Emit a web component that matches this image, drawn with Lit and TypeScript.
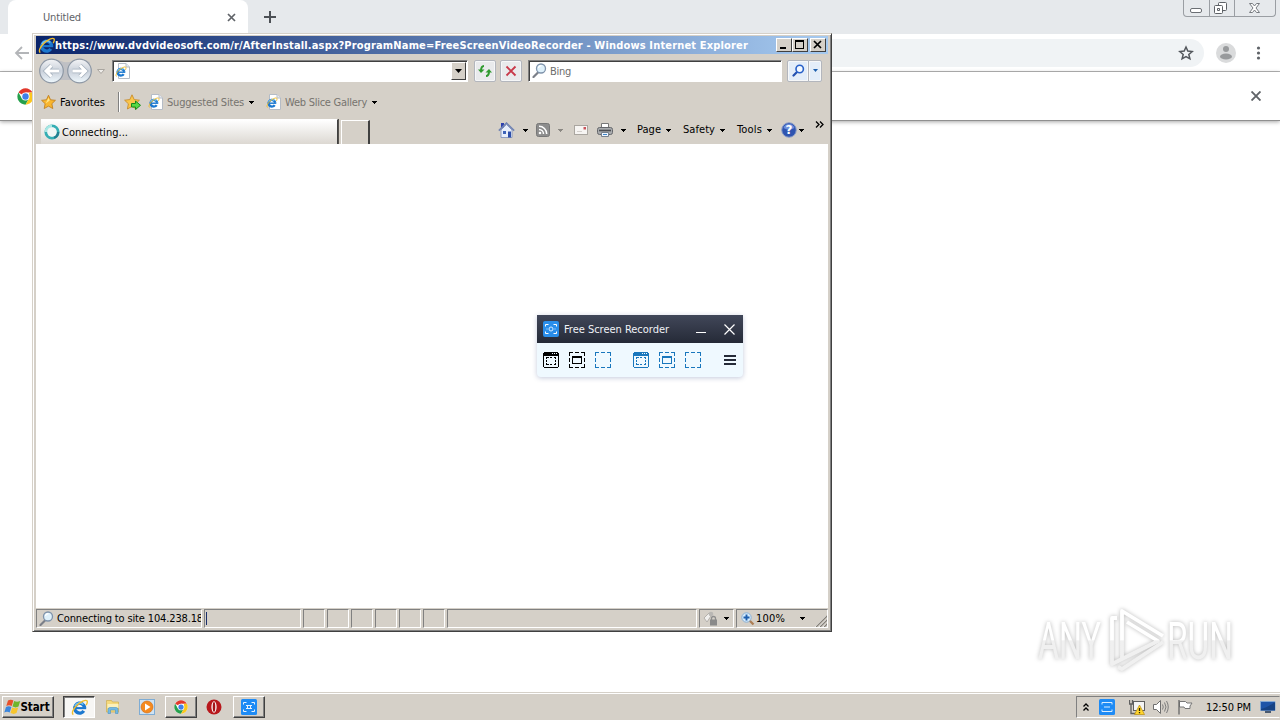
import { LitElement, css, html, svg } from "lit";
import { customElement, property, query } from "lit/decorators.js";

const arrow = (color = "#000") => html`
  <svg class="arrow" width="6" height="3" viewBox="0 0 6 3" shape-rendering="crispEdges">
    <path d="M1 0h5v1h-1v1h-1v1h-1v-1h-1v-1h-1z" fill=${color} />
  </svg>`;

const ieShape = svg`
  <circle cx="8.200" cy="8.600" r="4.600" fill="none" stroke="#1c78cf" stroke-width="3.300" stroke-dasharray="24.900 4" transform="rotate(34 8.200 8.600)" />
  <path d="M4.500 7.600h9.800v2h-9.800z" fill="#1c78cf" />
  <path d="M3.600 6.800a4.800 4.800 0 0 1 8-1.600" fill="none" stroke="#6fc0f2" stroke-width="1.500" />
  <path d="M2.200 14.600C.2 13.600 2 9.200 5.600 5.800S13.800.4 15 1.700c.7.8.2 2.400-.7 4" fill="none" stroke="#f0bd2c" stroke-width="1.300" />`;

const ieIcon = (size = 16) => html`
  <svg width=${size} height=${size} viewBox="0 0 16 16">${ieShape}</svg>`;

const iePage = html`
  <svg width="15" height="16" viewBox="0 0 15 16">
    <path d="M3.500.5h7.500l3.500 3.500v11.500h-11z" fill="#fff" stroke="#b5bcc6" />
    <path d="M11 .5v3.500h3.500" fill="#e6eaf0" stroke="#b5bcc6" />
    <g transform="translate(0 3) scale(.72)">${ieShape}</g>
  </svg>`;

const starPath = "M8 .8l2.200 4.800 5.200.6-3.800 3.600 1 5.200L8 12.400 3.400 15l1-5.200L.6 6.200l5.200-.6z";

const lens = (size = 15) => html`
  <svg width=${size} height=${size} viewBox="0 0 15 15">
    <path d="M6 9.500L1.500 14" stroke="#7b7f88" stroke-width="2.200" stroke-linecap="round" />
    <circle cx="9" cy="5.500" r="4.500" fill="#dff1fb" stroke="#7f93ab" stroke-width="1.300" />
    <path d="M6.500 5a2.600 2.600 0 0 1 3-2.200" fill="none" stroke="#fff" stroke-width="1.300" />
  </svg>`;

const chromeIcon = (size = 16) => html`
  <svg width=${size} height=${size} viewBox="0 0 48 48">
    <circle cx="24" cy="24" r="23" fill="#fff" />
    <path d="M24 24L4.100 12.500A23 23 0 0 1 43.900 12.500H24z" fill="#e2382c" />
    <path d="M4.100 12.500A23 23 0 0 0 24 47l10-17.300L24 24 14 29.700z" fill="#25a04c" />
    <path d="M43.900 12.500A23 23 0 0 1 24 47l10-17.300V12.500z" fill="#fbc71e" />
    <circle cx="24" cy="24" r="11.500" fill="#fff" />
    <circle cx="24" cy="24" r="9" fill="#3f80ea" />
  </svg>`;

const recorderIcon = html`
  <svg width="16" height="16" viewBox="0 0 16 16">
    <rect width="16" height="16" rx="2" fill="#2a8eea" />
    <path d="M2.500 5.500v-2h3M10.500 3.500h3v2M13.500 10.500v2h-3M5.500 12.500h-3v-2" fill="none" stroke="#fff" />
    <circle cx="8" cy="8" r="2" fill="none" stroke="#d6ecff" />
    <path d="M3.500 8h1M11.500 8h1" stroke="#d6ecff" />
  </svg>`;

const trayRecorderIcon = html`
  <svg width="16" height="16" viewBox="0 0 16 16">
    <rect width="16" height="16" rx="1.500" fill="#1e8bf5" />
    <path d="M2.500 5.500v-2h3M10.500 3.500h3v2M13.500 10.500v2h-3M5.500 12.500h-3v-2M5 6.500h6M5 9.500h6M6.500 6v4M9.500 6v4" fill="none" stroke="#e6f3ff" />
  </svg>`;

// Dashed selection frame, optionally with a browser bar or an inner window
const captureIcon = (kind: string, color: string) => html`
  <svg width="16" height="16" viewBox="0 0 16 16" shape-rendering="crispEdges">
    ${kind === "window" ? svg`
      <rect x=".5" y=".5" width="15" height="15" rx="2" fill="none" stroke=${color} />
      <path d="M1 1h14v3h-14z" fill=${color} />
      <path d="M9 1h1v1h-1zM11 1h1v1h-1zM13 1h1v1h-1z" fill="#eff9ff" />
      <path d="M3.500 7v-1.500h2M7 5.500h2M10.500 5.500h2v1.500M12.500 8v2M12.500 11v1.500h-2M9 12.500h-2M5.500 12.500h-2v-1.500M3.500 10v-2" fill="none" stroke=${color} />`
    : svg`
      <path d="M.5 4v-3.500h3.500M6 .5h4M12 .5h3.500v3.500M15.500 6v4M15.500 12v3.500h-3.500M10 15.500h-4M4 15.500h-3.500v-3.500M.5 10v-4" fill="none" stroke=${color} />`}
    ${kind === "object" ? svg`
      <rect x="3.500" y="4.500" width="9" height="7" fill="none" stroke=${color} />
      <path d="M3 4h10v2h-10z" fill=${color} />` : ""}
  </svg>`;

const homeIcon = html`
  <svg width="17" height="16" viewBox="0 0 17 16">
    <path d="M3 1h3v5h-3z" fill="#2b3fae" />
    <path d="M3 8l5.500-5.500L14 8v7.500h-11z" fill="#e7eefb" stroke="#7a8cb8" stroke-width=".8" />
    <path d="M.8 8.600L8.500 1l7.700 7.600" fill="none" stroke="#7083b3" stroke-width="1.500" />
    <path d="M5 9h3v3h-3z" fill="#3d63b8" />
    <path d="M10 9.500h3v6h-3z" fill="#2d4eaa" />
  </svg>`;

const rssIcon = html`
  <svg width="14" height="14" viewBox="0 0 14 14">
    <rect x=".5" y=".5" width="13" height="13" rx="2" fill="#8d8d8d" stroke="#777" />
    <circle cx="4" cy="10" r="1.300" fill="#fff" />
    <path d="M3 6.500a4.500 4.500 0 0 1 4.500 4.500M3 3.300a7.700 7.700 0 0 1 7.700 7.700" fill="none" stroke="#fff" stroke-width="1.500" />
  </svg>`;

const mailIcon = html`
  <svg width="15" height="12" viewBox="0 0 15 12">
    <rect x=".5" y="1.500" width="13" height="9" fill="#f7f5f3" stroke="#aaa6a0" />
    <path d="M3 7.500h5" stroke="#d4d0cc" />
    <path d="M9.500 3h2.500v2.500h-2.500z" fill="#c9545b" />
  </svg>`;

const printerIcon = html`
  <svg width="16" height="16" viewBox="0 0 16 16">
    <path d="M4.500 1.500h7v5h-7z" fill="#fff" stroke="#777" />
    <rect x=".5" y="5.500" width="15" height="7" rx="2" fill="#a9abae" stroke="#65676b" />
    <path d="M2 8.500h12" stroke="#4c4e53" stroke-width="1.600" />
    <path d="M4.500 10.500h7v4h-7z" fill="#eef6ff" stroke="#77818d" />
    <path d="M6 12.500h4" stroke="#3f86c9" />
  </svg>`;

const helpIcon = html`
  <svg width="16" height="16" viewBox="0 0 16 16">
    <circle cx="8" cy="8" r="7.300" fill="#2f54b0" stroke="#8fa0c8" />
    <path d="M2.500 6a5.800 5.800 0 0 1 11 0q-5.500 3-11 0z" fill="#6d8fdb" />
    <text x="8" y="12.300" text-anchor="middle" font-family="DejaVu Sans" font-weight="bold" font-size="12" fill="#fff">?</text>
  </svg>`;

@customElement("fit-label")
export class FitLabel extends LitElement {
  static styles = css`
    :host {
      display: block;
      flex: none;
      padding-top: 1px;
      white-space: pre;
      line-height: 14px;
    }
    span {
      display: inline-block;
    }
  `;

  @property({ type: String })
  text = "";

  @property({ type: Number })
  width = 0;

  @query("span")
  private span!: HTMLElement;

  // Spread the letters so that the text takes the width it was given
  firstUpdated() {
    const natural = this.span.getBoundingClientRect().width;
    this.style.width = `${this.width}px`;
    this.style.letterSpacing = `${(this.width - natural) / this.text.length}px`;
  }

  render() {
    return html`<span>${this.text}</span>`;
  }
}

const label = (text: string, width: number) => html`<fit-label text=${text} width=${width}></fit-label>`;

@customElement("chrome-window")
export class ChromeWindow extends LitElement {
  static styles = css`
    :host {
      display: flex;
      flex-direction: column;
      height: 692px;
      background: #fff;
      color: #5f6368;
    }
    svg {
      display: block;
      flex: none;
    }
    .strip {
      display: flex;
      height: 34px;
      padding-left: 8px;
      background: #e6e9ec;
    }
    .tab {
      display: flex;
      align-items: center;
      box-sizing: border-box;
      width: 240px;
      padding: 0 12px 0 35px;
      background: #fff;
      border-radius: 8px 8px 0 0;
      justify-content: space-between;
    }
    .plus {
      margin: 11px 0 0 16px;
    }
    .controls {
      display: flex;
      box-sizing: border-box;
      width: 93px;
      height: 17px;
      margin: 0 4px 0 auto;
      border: 1px solid #9a9ea3;
      border-top: 0;
      border-radius: 0 0 4px 4px;
    }
    .controls svg + svg {
      border-left: 1px solid #9a9ea3;
    }
    .toolbar {
      display: flex;
      align-items: center;
      height: 37px;
      padding: 0 19px 0 14px;
      border-bottom: 1px solid #b6b6b6;
    }
    .omnibox {
      display: flex;
      align-items: center;
      justify-content: flex-end;
      flex: 1;
      box-sizing: border-box;
      height: 28px;
      margin: 0 12px 0 70px;
      padding-right: 10px;
      border-radius: 14px;
      background: #f0f3f5;
    }
    .more {
      margin-left: 20px;
    }
    .infobar {
      display: flex;
      align-items: center;
      justify-content: space-between;
      height: 48px;
      padding: 0 19px 0 17px;
      border-bottom: 1px solid #8f8f8f;
      box-shadow: 0 1px 4px rgba(0, 0, 0, 0.35);
    }
  `;

  render() {
    return html`
      <div class="strip">
        <div class="tab">
          ${label("Untitled", 38)}
          <svg width="9" height="9" viewBox="0 0 9 9"><path d="M1 1l7 7M8 1L1 8" stroke="#5f6368" stroke-width="1.700" /></svg>
        </div>
        <svg class="plus" width="12" height="12" viewBox="0 0 12 12"><path d="M0 6h12M6 0v12" stroke="#4c5055" stroke-width="2" /></svg>
        <div class="controls">
          <svg width="25" height="16" viewBox="0 0 25 16"><rect x="6.500" y="8.500" width="11" height="4" rx="1.500" fill="#fff" stroke="#6b6f74" /></svg>
          <svg width="24" height="16" viewBox="0 0 24 16">
            <rect x="8.500" y="2.500" width="8" height="8" rx="1" fill="#fff" stroke="#5d6166" />
            <rect x="4.500" y="5.500" width="8" height="8" rx="1" fill="#fff" stroke="#5d6166" />
            <path d="M7.500 8.500h2v2h-2z" fill="none" stroke="#5d6166" />
          </svg>
          <svg width="40" height="16" viewBox="0 0 40 16">
            <path d="M14.500 3.500h3l2 2.500 2-2.500h3l-3.500 4.500 3.500 4.500h-3l-2-2.500-2 2.500h-3l3.500-4.500z" fill="#fff" stroke="#777b80" />
          </svg>
        </div>
      </div>
      <div class="toolbar">
        <svg width="16" height="14" viewBox="0 0 16 14"><path d="M15 7H2M8 1L2 7l6 6" fill="none" stroke="#b3b5b8" stroke-width="1.800" /></svg>
        <div class="omnibox">
          <svg width="16" height="16" viewBox="0 0 16 16"><path d="M8 2l1.800 4.100 4.400.4-3.400 2.900 1.100 4.400L8 11.500l-3.900 2.300 1.100-4.400-3.400-2.900 4.400-.4z" fill="none" stroke="#53575c" stroke-width="1.500" /></svg>
        </div>
        <svg width="20" height="20" viewBox="0 0 20 20">
          <circle cx="10" cy="10" r="10" fill="#dadbdc" />
          <circle cx="10" cy="6" r="3" fill="#989a9c" />
          <ellipse cx="10" cy="13.500" rx="6" ry="3" fill="#989a9c" />
        </svg>
        <svg class="more" width="5" height="14" viewBox="0 0 5 14">
          <circle cx="2.500" cy="2" r="1.600" fill="#5f6368" /><circle cx="2.500" cy="7" r="1.600" fill="#5f6368" /><circle cx="2.500" cy="12" r="1.600" fill="#5f6368" />
        </svg>
      </div>
      <div class="infobar">
        ${chromeIcon(17)}
        <svg width="10" height="10" viewBox="0 0 10 10"><path d="M.5.5l9 9M9.500.5l-9 9" stroke="#606468" stroke-width="1.900" /></svg>
      </div>
    `;
  }
}

@customElement("explorer-window")
export class ExplorerWindow extends LitElement {
  static styles = css`
    :host {
      display: flex;
      flex-direction: column;
      box-sizing: border-box;
      width: 800px;
      height: 599px;
      padding: 2px;
      border: 1px solid;
      border-color: #d5d0c8 #404040 #404040 #d5d0c8;
      background: #d5d0c8;
      box-shadow: inset 1px 1px #fff, inset -1px -1px #808080;
      color: #000;
    }
    svg {
      display: block;
      flex: none;
    }
    .title {
      display: flex;
      align-items: center;
      height: 18px;
      margin: 0 1px;
      padding-right: 2px;
      background: linear-gradient(90deg, #0a246a, #a6caf0);
      color: #fff;
      font-weight: bold;
    }
    .title svg {
      margin: 0 0 0 2px;
    }
    .buttons {
      display: flex;
      margin-left: auto;
    }
    .buttons svg {
      box-sizing: border-box;
      width: 16px;
      height: 14px;
      margin: 0;
      background: #d5d0c8;
      border: 1px solid;
      border-color: #fff #404040 #404040 #fff;
    }
    .buttons .close {
      margin-left: 2px;
    }
    .nav {
      display: flex;
      align-items: center;
      height: 33px;
      padding-left: 4px;
    }
    .field {
      display: flex;
      align-items: center;
      box-sizing: border-box;
      height: 22px;
      background: #fff;
      border: 1px solid;
      border-color: #808080 #fff #fff #808080;
      box-shadow: inset 1px 1px #404040;
    }
    .address {
      width: 356px;
      margin-left: 5px;
      padding: 0 1px 0 2px;
      justify-content: space-between;
    }
    .drop {
      display: flex;
      align-items: center;
      justify-content: center;
      box-sizing: border-box;
      width: 15px;
      height: 18px;
      background: #d5d0c8;
      border: 1px solid;
      border-color: #fff #404040 #404040 #fff;
    }
    .tool {
      display: flex;
      align-items: center;
      justify-content: center;
      box-sizing: border-box;
      width: 22px;
      height: 22px;
      border: 1px solid #b3b6bd;
      border-radius: 2px;
      background: #e9eaec;
      box-shadow: inset 0 0 0 1px #f6f7f8;
    }
    .refresh {
      margin: 0 4px 0 6px;
    }
    .search {
      width: 254px;
      margin: 0 5px 0 6px;
      padding-left: 3px;
      color: #6d6d6d;
    }
    .search fit-label {
      margin: 2px 0 0 3px;
    }
    .find {
      background: #e3edf9;
      border-radius: 2px 0 0 2px;
    }
    .options {
      width: 14px;
      margin-left: -1px;
      background: #e3edf9;
      border-radius: 0 2px 2px 0;
    }
    .favorites {
      display: flex;
      align-items: center;
      height: 30px;
      padding-left: 6px;
      color: #77746f;
    }
    .favorites .black {
      margin: 0 13px 0 4px;
      color: #000;
    }
    .rule {
      width: 1px;
      height: 20px;
      margin-right: 4px;
      background: #808080;
      border-right: 1px solid #fff;
    }
    .add {
      margin-right: 7px;
    }
    .favorites .arrow {
      margin: 0 12px 0 4px;
    }
    .favorites fit-label {
      margin-left: 4px;
    }
    .favorites .black fit-label {
      margin: 0;
    }
    .tabs {
      display: flex;
      align-items: flex-end;
      height: 27px;
      padding: 0 2px 0 6px;
    }
    .tab {
      display: flex;
      align-items: center;
      gap: 2px;
      box-sizing: border-box;
      width: 297px;
      height: 25px;
      padding-left: 3px;
      border-top: 1px solid #fff;
      border-right: 1px solid #404040;
      background: linear-gradient(#fff, #dcd8d2);
      box-shadow: 1px 0 #55524e;
    }
    .new {
      box-sizing: border-box;
      width: 29px;
      height: 24px;
      margin-left: 3px;
      border: 1px solid #fff;
      border-right: 2px solid #404040;
      border-bottom: 0;
    }
    .commands {
      display: flex;
      align-items: center;
      flex: 1;
      height: 28px;
      margin-left: 128px;
    }
    .commands fit-label {
      padding: 0;
    }
    .commands .arrow {
      margin: 0 8px 0 7px;
    }
    .commands .rss {
      margin-right: 3px;
      display: flex;
      align-items: center;
    }
    .commands .print {
      margin-left: 8px;
      display: flex;
      align-items: center;
    }
    .menu {
      display: flex;
      align-items: center;
      margin-left: 3px;
    }
    .commands .menu .arrow {
      margin: 0 8px 0 4px;
    }
    .menu + .menu {
      margin-left: 4px;
    }
    .commands .help {
      margin-left: 1px;
    }
    .commands .help .arrow {
      margin: 0 11px 0 1px;
    }
    .chevrons {
      align-self: flex-start;
      margin-top: 5px;
    }
    .page {
      flex: 1;
      margin: 0 1px;
      background: #fff;
    }
    .status {
      display: flex;
      gap: 2px;
      height: 20px;
      margin: 1px 1px 0;
    }
    .cell {
      display: flex;
      align-items: center;
      box-sizing: border-box;
      width: 22px;
      height: 19px;
      border: 1px solid;
      border-color: #808080 #fff #fff #808080;
    }
    .message {
      width: 166px;
      padding-left: 2px;
      gap: 3px;
      overflow: hidden;
    }
    .progress {
      width: 97px;
      padding-left: 1px;
    }
    .bar {
      width: 1px;
      height: 13px;
      background: #1c2f6b;
    }
    .zone {
      width: 250px;
    }
    .lock {
      width: 35px;
      padding-left: 3px;
      gap: 4px;
    }
    .zoom {
      width: 92px;
      padding-left: 4px;
      gap: 1px;
    }
    .zoom .arrow {
      margin: 0 9px 0 13px;
    }
    .grip {
      margin-top: 5px;
    }
  `;

  private renderNav() {
    return html`
      <div class="nav">
        <svg width="68" height="28" viewBox="0 0 68 28">
          <defs>
            <linearGradient id="orb" x2="0" y2="1">
              <stop offset="0" stop-color="#f3f4f6" /><stop offset=".5" stop-color="#c9d0da" /><stop offset="1" stop-color="#eff8fd" />
            </linearGradient>
          </defs>
          <path d="M4 4q9-3.500 18 0 5 2.500 12 0 9-3 17 1l-3 18h-42z" fill="#bfc0c4" />
          <circle cx="12.500" cy="14" r="11.800" fill="url(#orb)" stroke="#8e98a5" stroke-width="1.200" />
          <circle cx="40.500" cy="14" r="11.800" fill="url(#orb)" stroke="#8e98a5" stroke-width="1.200" />
          <path d="M20 14h-12M12.500 8.500L7 14l5.500 5.500" fill="none" stroke="#a3afbc" stroke-width="4.500" />
          <path d="M20 14h-12M12.500 8.500L7 14l5.500 5.500" fill="none" stroke="#fff" stroke-width="3" />
          <path d="M33.500 14h12M41 8.500L46.500 14l-5.500 5.500" fill="none" stroke="#a3afbc" stroke-width="4.500" />
          <path d="M33.500 14h12M41 8.500L46.500 14l-5.500 5.500" fill="none" stroke="#fff" stroke-width="3" />
          <path d="M58.500 12.500h7l-3.500 4z" fill="#efedea" stroke="#aaa6a0" />
        </svg>
        <div class="field address">
          ${iePage}
          <div class="drop">
            <svg width="7" height="4" viewBox="0 0 7 4"><path d="M0 0h7L3.500 4z" /></svg>
          </div>
        </div>
        <div class="tool refresh">
          <svg width="14" height="14" viewBox="0 0 14 14">
            <path d="M6 2q-3 0-3 5" fill="none" stroke="#2f9a2f" stroke-width="2" /><path d="M0 5.500h6.500L3 9z" fill="#2f9a2f" />
            <path d="M8 12q3 0 3-5" fill="none" stroke="#2f9a2f" stroke-width="2" /><path d="M7.500 8.500h6.500L11 5z" fill="#2f9a2f" />
          </svg>
        </div>
        <div class="tool">
          <svg width="12" height="12" viewBox="0 0 12 12"><path d="M1.500 1.500l9 9M10.500 1.500l-9 9" stroke="#c8394a" stroke-width="1.900" /></svg>
        </div>
        <div class="field search">${lens(15)} ${label("Bing", 21)}</div>
        <div class="tool find">
          <svg width="13" height="13" viewBox="0 0 13 13">
            <path d="M5 8L1.500 11.500" stroke="#2350b0" stroke-width="2.200" stroke-linecap="round" />
            <circle cx="7.700" cy="5" r="3.700" fill="#f4f9ff" stroke="#2860c8" stroke-width="1.600" />
          </svg>
        </div>
        <div class="tool options">
          <svg width="5" height="3" viewBox="0 0 5 3"><path d="M0 0h5L2.500 3z" fill="#1d5fae" /></svg>
        </div>
      </div>`;
  }

  private renderFavorites() {
    return html`
      <div class="favorites">
        <svg width="15" height="16" viewBox="0 0 16 16"><path d=${starPath} fill="#f9b62e" stroke="#bf7f20" stroke-width=".9" /><path d="M8 3.500l1.300 3-4.300 3z" fill="#ffe68a" /></svg>
        <div class="black">${label("Favorites", 45)}</div>
        <div class="rule"></div>
        <svg class="add" width="17" height="16" viewBox="0 0 17 16">
          <path d=${starPath} fill="#fbc64b" stroke="#c88d2c" stroke-width=".9" />
          <path d="M7.500 9.500h4v-2.500l5 4.300-5 4.200v-2.500h-4z" fill="#58d844" stroke="#188a1b" />
        </svg>
        ${iePage} ${label("Suggested Sites", 77)} ${arrow()}
        ${iePage} ${label("Web Slice Gallery", 82)} ${arrow()}
      </div>`;
  }

  private renderTabs() {
    return html`
      <div class="tabs">
        <div class="tab">
          <svg width="16" height="16" viewBox="0 0 16 16">
            <circle cx="8" cy="8" r="6" fill="none" stroke="#35aeb4" stroke-width="3.200" />
            <path d="M2 8a6 6 0 0 1 6-6" fill="none" stroke="#a8e6e3" stroke-width="3.200" />
            <path d="M14 8a6 6 0 0 1-4 5.600" fill="none" stroke="#237e90" stroke-width="2.600" />
            <circle cx="8" cy="8" r="4.800" fill="#f2f6f5" />
          </svg>
          ${label("Connecting...", 66)}
        </div>
        <div class="new"></div>
        <div class="commands">
          ${homeIcon} ${arrow()}
          <div class="rss">${rssIcon} ${arrow("#8b8883")}</div>
          ${mailIcon}
          <div class="print">${printerIcon} ${arrow()}</div>
          <div class="menu">${label("Page", 24)} ${arrow()}</div>
          <div class="menu">${label("Safety", 32)} ${arrow()}</div>
          <div class="menu">${label("Tools", 25)} ${arrow()}</div>
          <div class="menu help">${helpIcon} ${arrow()}</div>
          <svg class="chevrons" width="9" height="7" viewBox="0 0 9 7"><path d="M1 .5l3 3-3 3M5 .5l3 3-3 3" fill="none" stroke="#000" stroke-width="1.300" /></svg>
        </div>
      </div>`;
  }

  private renderStatus() {
    return html`
      <div class="status">
        <div class="cell message">${lens(15)} ${label("Connecting to site 104.238.18", 146)}</div>
        <div class="cell progress"><div class="bar"></div></div>
        ${[1, 2, 3, 4, 5, 6].map(() => html`<div class="cell"></div>`)}
        <div class="cell zone"></div>
        <div class="cell lock">
          <svg width="16" height="15" viewBox="0 0 16 15">
            <path d="M1 7l5-5 2 3-4 6z" fill="#f0efed" stroke="#b4b1ac" />
            <circle cx="8" cy="3" r="2.300" fill="#b9b7b4" />
            <path d="M8.500 9v-1.500a2 2 0 0 1 4 0V9" fill="none" stroke="#8e8e8e" stroke-width="1.300" />
            <rect x="7" y="8.500" width="7" height="6" fill="#8a8a8a" />
          </svg>
          ${arrow()}
        </div>
        <div class="cell zoom">
          <svg width="14" height="14" viewBox="0 0 14 14">
            <path d="M8 8l4.500 4.500" stroke="#ad7e54" stroke-width="2.300" />
            <circle cx="5.500" cy="5.500" r="4.700" fill="#d5ebfb" stroke="#8bb0d4" />
            <path d="M5.500 2.500v6M2.500 5.500h6" stroke="#1f5fae" stroke-width="1.900" />
          </svg>
          ${label("100%", 29)} ${arrow()}
          <svg class="grip" width="12" height="12" viewBox="0 0 12 12">
            <path d="M1 12L12 1M5 12l7-7M9 12l3-3" stroke="#fff" transform="translate(-1 0)" />
            <path d="M1 12L12 1M5 12l7-7M9 12l3-3" stroke="#858179" stroke-width="1.300" />
          </svg>
        </div>
      </div>`;
  }

  render() {
    return html`
      <div class="title">
        ${ieIcon(17)}
        ${label("https://www.dvdvideosoft.com/r/AfterInstall.aspx?ProgramName=FreeScreenVideoRecorder - Windows Internet Explorer", 693)}
        <div class="buttons">
          <svg viewBox="0 0 14 12"><path d="M3 8h6v2h-6z" /></svg>
          <svg viewBox="0 0 14 12" shape-rendering="crispEdges"><path d="M2.500 1.500h8v8h-8z" fill="none" stroke="#000" /><path d="M2 1h9v2h-9z" /></svg>
          <svg class="close" viewBox="0 0 14 12"><path d="M3 2l7 7M10 2L3 9" stroke="#000" stroke-width="1.700" /></svg>
        </div>
      </div>
      ${this.renderNav()} ${this.renderFavorites()} ${this.renderTabs()}
      <div class="page"></div>
      ${this.renderStatus()}
    `;
  }
}

@customElement("recorder-panel")
export class RecorderPanel extends LitElement {
  static styles = css`
    :host {
      display: block;
      width: 206px;
      height: 62px;
      background: #eff9ff;
      border-radius: 2px 2px 4px 4px;
      box-shadow: 0 1px 5px rgba(60, 80, 140, 0.3);
    }
    svg {
      display: block;
      flex: none;
    }
    .title {
      display: flex;
      align-items: center;
      height: 28px;
      padding: 0 8px 0 6px;
      background: linear-gradient(#414759, #252a37);
      color: #f0f2f6;
    }
    .title fit-label {
      margin: 0 27px 0 5px;
    }
    .title .min {
      margin: 7px 18px 0 0;
    }
    .tools {
      display: flex;
      align-items: center;
      height: 34px;
      padding: 0 7px 0 6px;
    }
    .group {
      display: flex;
      gap: 10px;
      margin-right: 22px;
    }
    .burger {
      margin-left: 1px;
    }
  `;

  render() {
    const blue = "#1977bd";
    return html`
      <div class="title">
        ${recorderIcon} ${label("Free Screen Recorder", 105)}
        <svg class="min" width="10" height="1" viewBox="0 0 10 1"><path d="M0 0h10v1H0z" fill="#fff" /></svg>
        <svg width="11" height="11" viewBox="0 0 11 11"><path d="M.5.5l10 10M10.500.5l-10 10" stroke="#fff" stroke-width="1.200" /></svg>
      </div>
      <div class="tools">
        <div class="group">${captureIcon("window", "#000")} ${captureIcon("object", "#000")} ${captureIcon("area", blue)}</div>
        <div class="group">${captureIcon("window", blue)} ${captureIcon("object", blue)} ${captureIcon("area", blue)}</div>
        <svg class="burger" width="12" height="10" viewBox="0 0 12 10"><path d="M0 0h12v2H0zM0 4h12v2H0zM0 8h12v2H0z" fill="#252b38" /></svg>
      </div>
    `;
  }
}

@customElement("task-bar")
export class TaskBar extends LitElement {
  static styles = css`
    :host {
      display: flex;
      align-items: center;
      box-sizing: border-box;
      height: 28px;
      padding: 1px 0 0 2px;
      border-top: 1px solid #d5d0c8;
      background: #d5d0c8;
      box-shadow: inset 0 1px #fff;
      color: #000;
    }
    svg {
      display: block;
      flex: none;
    }
    .button {
      display: flex;
      align-items: center;
      justify-content: center;
      box-sizing: border-box;
      width: 32px;
      height: 22px;
      border: 1px solid;
      border-color: #fff #404040 #404040 #fff;
      box-shadow: inset -1px -1px #808080;
    }
    .start {
      width: 52px;
      margin-right: 9px;
      padding-right: 3px;
      font-weight: bold;
      font-size: 11.5px;
    }
    .start fit-label {
      padding: 0;
    }
    .active {
      margin-right: 10px;
      background: #f7f6f4;
      border-color: #404040 #fff #fff #404040;
      box-shadow: inset 1px 1px #808080;
    }
    .media {
      margin: 0 10px 0 18px;
    }
    .opera {
      margin: 0 11px 0 9px;
    }
    .tray {
      display: flex;
      align-items: center;
      box-sizing: border-box;
      width: 204px;
      height: 22px;
      margin-left: auto;
      padding-left: 6px;
      border: 1px solid;
      border-color: #808080 transparent #fff #808080;
    }
    .app {
      margin: 0 14px 0 10px;
    }
    .sound {
      margin: 0 8px;
    }
    .tray fit-label {
      margin: 0 9px 0 13px;
    }
  `;

  render() {
    return html`
      <div class="button start">
        <svg width="17" height="16" viewBox="0 0 17 16">
          <path d="M4 1.500q2.700-1.600 5.400 0l-1.700 5.600q-2.700-1.600-5.400 0z" fill="#e8502a" />
          <path d="M10.200 2q2.700 1.600 6 0l-1.700 5.600q-2.700 1.600-6 0z" fill="#6fb52c" />
          <path d="M2 8q2.700-1.600 5.400 0l-1.700 5.600q-2.700-1.600-5.400 0z" fill="#3c86dc" />
          <path d="M8.200 8.500q2.700 1.600 6 0l-1.700 5.600q-2.700 1.600-6 0z" fill="#f7c52d" />
        </svg>
        ${label("Start", 29)}
      </div>
      <div class="button active">${ieIcon(17)}</div>
      <svg width="16" height="16" viewBox="0 0 16 16">
        <path d="M1.500 3.500v-2h5l1 1.500h6v10h-12z" fill="#f5d97c" stroke="#cfae4e" stroke-width=".7" />
        <path d="M2.500 5h11v4h-11z" fill="#fbf0bb" />
        <path d="M3 14.500v-4q0-2 2-2h6q2 0 2 2v4h-2.500v-3.500h-5v3.500z" fill="#74b9e4" stroke="#4a93c4" stroke-width=".6" />
      </svg>
      <svg class="media" width="16" height="16" viewBox="0 0 16 16">
        <rect x=".5" y=".5" width="15" height="15" fill="#cfe3f3" stroke="#7eacd4" />
        <circle cx="8" cy="8" r="6" fill="#f58a1f" stroke="#cf6a12" stroke-width=".6" />
        <path d="M6 4.500L11.500 8 6 11.500z" fill="#fff" />
      </svg>
      <div class="button">${chromeIcon(14)}</div>
      <svg class="opera" width="16" height="16" viewBox="0 0 16 16">
        <ellipse cx="8" cy="8" rx="7.500" ry="7.500" fill="#b8181c" />
        <ellipse cx="8" cy="8" rx="2.600" ry="5.700" fill="#fff" />
        <ellipse cx="8" cy="8" rx="1.300" ry="4.900" fill="#a51317" />
      </svg>
      <div class="button">${trayRecorderIcon}</div>
      <div class="tray">
        <svg width="6" height="8" viewBox="0 0 6 8"><path d="M.5 3.500L3 1l2.500 2.500M.5 7.500L3 5l2.500 2.500" fill="none" stroke="#000" stroke-width="1.300" /></svg>
        <svg class="app" width="16" height="16" viewBox="0 0 16 16">
          <rect width="16" height="16" rx="1.500" fill="#1e8bf5" />
          <path d="M3 5.500v-2h10v2M5 8h6M3 10.500v2h10v-2" fill="none" stroke="#d9edff" />
        </svg>
        <svg width="16" height="16" viewBox="0 0 16 16">
          <rect x="4.500" y="2.500" width="11" height="9" fill="#f4f4f4" stroke="#5f5f5f" />
          <path d="M.5 1v4h3v-4M2 5v9.500h6" fill="none" stroke="#5f5f5f" stroke-width="1.300" />
          <path d="M10.500 6l5 9.500h-10z" fill="#ffd52e" stroke="#b88c12" stroke-width=".7" />
          <path d="M10.500 9v3M10.500 13v1.300" stroke="#2e2600" stroke-width="1.300" />
        </svg>
        <svg class="sound" width="16" height="16" viewBox="0 0 16 16">
          <path d="M.5 5.500h3l4-4v13l-4-4h-3z" fill="#fff" stroke="#6e6e6e" />
          <path d="M9.500 5.500q1.500 2.500 0 5M11.500 3.500q3 4.500 0 9M13.500 2q3.500 6 0 12" fill="none" stroke="#7d7d7d" />
        </svg>
        <svg width="16" height="16" viewBox="0 0 16 16">
          <path d="M2.500 2.500h6l1.500 1.500h5l-2 3 0 2.500h-5l-1-1.500h-4.500z" fill="#fff" stroke="#777" />
          <path d="M2 1v14.500" stroke="#666" stroke-width="1.300" />
        </svg>
        ${label("12:50 PM", 45)}
        <svg width="16" height="14" viewBox="0 0 16 14">
          <path d="M.5 1.500h14.500v9h-14.500z" fill="#1f55a8" stroke="#86a9d2" />
          <path d="M1 9q6-1 14-7v8.500h-14z" fill="#174384" />
          <path d="M5 11h6v2h-6z" fill="#4a5a70" />
        </svg>
      </div>
    `;
  }
}

@customElement("app-root")
export class AppRoot extends LitElement {
  static styles = css`
    :host {
      display: block;
      position: relative;
      width: 1280px;
      height: 720px;
      overflow: hidden;
      background: #fff;
      font: 11px "DejaVu Sans Condensed", "DejaVu Sans", sans-serif;
    }
    explorer-window {
      position: absolute;
      left: 32px;
      top: 33px;
    }
    recorder-panel {
      position: absolute;
      left: 537px;
      top: 315px;
    }
    .watermark {
      position: absolute;
      left: 1030px;
      top: 600px;
      overflow: visible;
      filter: drop-shadow(0 0 2px rgba(0, 0, 0, 0.28));
    }
    .watermark text {
      font: 52px Roboto, sans-serif;
    }
  `;

  render() {
    return html`
      <chrome-window></chrome-window>
      <task-bar></task-bar>
      <svg class="watermark" width="230" height="80" viewBox="0 0 230 80">
        <defs>
          <linearGradient id="fade" gradientUnits="userSpaceOnUse" x1="0" y1="0" x2="0" y2="80">
            <stop offset=".5" stop-color="#fff" /><stop offset=".51" stop-color="#f0f0f0" />
          </linearGradient>
        </defs>
        <text x="8" y="59" textLength="63" lengthAdjust="spacingAndGlyphs" fill="url(#fade)">ANY</text>
        <text x="137" y="59" textLength="66" lengthAdjust="spacingAndGlyphs" fill="url(#fade)">RUN</text>
        <g fill="none" stroke="url(#fade)" stroke-width="3.800" stroke-linejoin="round">
          <path d="M92 59V11L133 36" />
          <path d="M87 18h-5v46L128 41 97 22" />
          <path d="M133 42L92 69l-4-2" />
        </g>
      </svg>
      <explorer-window></explorer-window>
      <recorder-panel></recorder-panel>
    `;
  }
}
